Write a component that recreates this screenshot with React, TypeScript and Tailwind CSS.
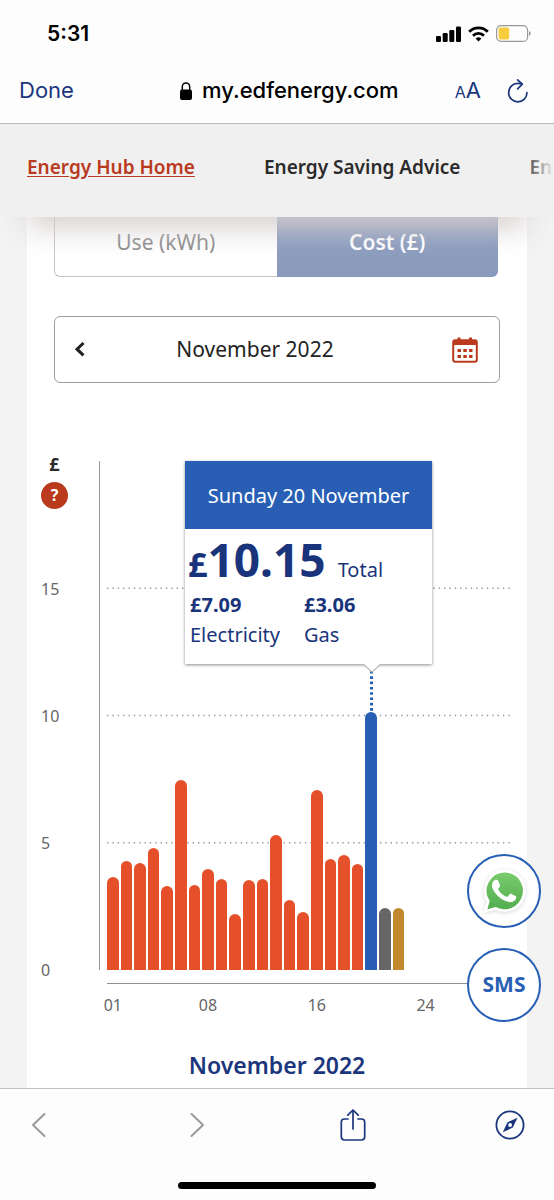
const AXIS_MAX = 20;
const DAYS_IN_MONTH = 30;
const SELECTED_DAY = 20;

const dailyCost = [
  3.66, 4.3, 4.2, 4.78, 3.3, 7.48, 3.36, 3.95, 3.57, 2.2, 3.52, 3.57, 5.32, 2.77, 2.26, 7.06,
  4.37, 4.53, 4.15, 10.12, 2.42, 2.42,
];

const days = Array.from({ length: DAYS_IN_MONTH }, (_, i) => i + 1);
const labelledDays = [1, 8, 16, 24];
const ticks = [15, 10, 5, 0];

function barColour(day: number) {
  if (day === SELECTED_DAY) return "bg-[#285fb5]";
  if (day === 21) return "bg-[#666666]";
  if (day === 22) return "bg-[#c2882d]";
  return "bg-[#e5502b]";
}

function StatusBar() {
  return (
    <div className="flex h-[58px] items-center justify-between pt-[9px] pr-[23px] pl-[47px] text-black">
      <span className="text-[21px] font-semibold">5:31</span>
      <div className="flex items-center gap-[7px]">
        <svg className="h-4 w-[25px]" viewBox="0 0 25 16" fill="currentColor">
          <rect x="0" y="10" width="5" height="6" rx="1.2" />
          <rect x="6.7" y="7" width="5" height="9" rx="1.2" />
          <rect x="13.3" y="4" width="5" height="12" rx="1.2" />
          <rect x="20" y="0.5" width="5" height="15.5" rx="1.2" />
        </svg>
        <svg className="h-4 w-[21px]" viewBox="0 0 21 16" fill="none" stroke="currentColor" strokeWidth="2.8">
          <path d="M1.2 5.8a13.2 13.2 0 0 1 18.6 0" />
          <path d="M5 9.7a7.8 7.8 0 0 1 11 0" />
          <path d="M7.6 12.6a4.1 4.1 0 0 1 5.8 0l-2.9 3z" fill="currentColor" stroke="none" />
        </svg>
        <svg className="h-[17px] w-[35px]" viewBox="0 0 35 17">
          <rect x="0.6" y="0.6" width="31" height="15.8" rx="4.5" fill="none" stroke="#999" strokeWidth="1.2" />
          <rect x="2.6" y="2.6" width="10.6" height="11.8" rx="2" fill="#f7cd3d" />
          <path d="M33 6v5c1-.4 1.7-1.3 1.7-2.5S34 6.4 33 6z" fill="#999" />
        </svg>
      </div>
    </div>
  );
}

function AddressBar() {
  return (
    <div className="flex h-[66px] items-center border-b border-[#b9b9bb] pr-[25px] pl-[19px] text-[22px] text-[#1b367d]">
      <button type="button">Done</button>
      <div className="flex flex-1 items-center justify-center gap-[10px] pl-[50px] font-medium text-black">
        <svg className="h-[18px] w-3" viewBox="0 0 12 18">
          <rect x="0" y="7.5" width="12" height="10.5" rx="2" fill="currentColor" />
          <path d="M2.3 8.5V4.8a3.7 3.9 0 0 1 7.4 0v3.7" fill="none" stroke="currentColor" strokeWidth="1.5" />
        </svg>
        <span>my.edfenergy.com</span>
      </div>
      <button type="button" aria-label="Text size" className="flex items-baseline">
        <span className="text-base">A</span>
        <span>A</span>
      </button>
      <button type="button" aria-label="Reload" className="ml-[26px]">
        <svg
          className="h-[26px] w-[22px]"
          viewBox="0 0 22 26"
          fill="none"
          stroke="currentColor"
          strokeWidth="1.7"
          strokeLinecap="round"
          strokeLinejoin="round"
        >
          <path d="M20 14.5A9.2 9.2 0 1 1 10.8 5.4c1.6 0 2.9.1 4.2.6" />
          <path d="M10.6 1.8l4.7 4.4-4.7 4.6" />
        </svg>
      </button>
    </div>
  );
}

function SiteNav() {
  return (
    <nav className="relative flex h-[93px] items-center gap-[69px] overflow-hidden bg-[#f0f0f0] pb-1.5 pl-[27px] text-[19px] font-semibold whitespace-nowrap text-[#2b2b2b]">
      <a href="#home" className="text-[#b93a20] underline underline-offset-2">
        Energy Hub Home
      </a>
      <a href="#advice">Energy Saving Advice</a>
      <a href="#more">En</a>
      <div className="absolute inset-y-0 right-0 w-8 bg-gradient-to-r from-transparent to-[#f0f0f0]" />
    </nav>
  );
}

function UnitToggle() {
  return (
    <div className="-mt-[10px] mr-[2px] flex h-[70px] text-[21px]">
      <button type="button" className="flex-1 rounded-bl-md border-b border-l border-[#c4c4c4] pt-0.5 text-[#8a8a8a]">
        Use (kWh)
      </button>
      <button type="button" className="flex-1 rounded-br-md bg-[#8a9bbd] pt-0.5 font-semibold text-white">
        Cost (£)
      </button>
    </div>
  );
}

function MonthPicker() {
  return (
    <div className="mt-[39px] flex h-[67px] items-center justify-between rounded-md border border-[#9d9d9d] pr-[21px] pl-[19px] text-[21px] text-[#222]">
      <button type="button" aria-label="Previous month">
        <svg className="h-4 w-[11px]" viewBox="0 0 11 16" fill="none" stroke="currentColor" strokeWidth="3">
          <path d="M9.5 1L3 7.2l6.5 6.2" />
        </svg>
      </button>
      <span className="flex-1 pr-[27px] text-center">November 2022</span>
      <button type="button" aria-label="Pick a date" className="text-[#b93a1c]">
        <svg className="h-[26px] w-[26px]" viewBox="0 0 26 26" fill="currentColor">
          <rect x="1.2" y="3.2" width="23.6" height="21.6" rx="2" fill="none" stroke="currentColor" strokeWidth="2" />
          <path d="M1 3h24v5H1zM5.5 0.5h3v3h-3zM17 0.5h3v3h-3z" />
          <path d="M5.5 12H9v3H5.5zM11.3 12h3.5v3h-3.5zM17 12h3.500v3H17zM5.5 18H9v3H5.5zM11.3 18h3.5v3h-3.5zM17 18h3.5v3H17z" />
        </svg>
      </button>
    </div>
  );
}

function DayTooltip() {
  return (
    <div className="absolute top-0 left-[85px] w-[247px]">
      <div className="h-[203px] bg-white text-xl text-[#19347a] shadow-[0_1px_3px_rgba(0,0,0,0.45)]">
        <div className="flex h-[68px] items-center justify-center bg-[#285fb5] pt-0.5 text-white">
          Sunday 20 November
        </div>
        <p className="flex h-[61px] items-baseline pt-[7px] pl-[3px] leading-[46px] font-bold">
          <span className="text-[34px]">£</span>
          <span className="text-[46px]">10.15</span>
          <span className="ml-3 font-normal">Total</span>
        </p>
        <dl className="flex gap-6 pl-[5px] leading-[30px]">
          <div className="flex flex-col-reverse">
            <dt>Electricity</dt>
            <dd className="font-bold">£7.09</dd>
          </div>
          <div className="flex flex-col-reverse">
            <dt>Gas</dt>
            <dd className="font-bold">£3.06</dd>
          </div>
        </dl>
      </div>
      <svg className="absolute top-[202px] left-[177px] h-[52px] w-[20px]" viewBox="0 0 20 52">
        <path d="M9.5 8v44" stroke="#285fb5" strokeWidth="3" strokeDasharray="2.6 2.7" />
        <path d="M1 0l9 8.5L19 0z" fill="#fff" />
        <path d="M1 1l9 8L19 1" fill="none" stroke="#bbb" strokeWidth="1.3" />
      </svg>
    </div>
  );
}

function CostChart() {
  return (
    <section className="mt-[73px] flex pr-[14px] pl-[14px]">
      <div className="w-[58px] text-base text-[#666]">
        <div className="flex w-[27px] flex-col items-center gap-[10px]">
          <span className="h-4 text-lg leading-4 font-bold text-[#2b2b2b]">£</span>
          <button
            type="button"
            aria-label="About these costs"
            className="h-[27px] w-[27px] rounded-full bg-[#b93a1c] text-base leading-[27px] font-bold text-white"
          >
            ?
          </button>
        </div>
        <div className="mt-4">
          {ticks.map(tick => (
            <div key={tick} className="flex h-[127px] items-center">
              {tick}
            </div>
          ))}
        </div>
      </div>

      <div className="flex-1 pt-[5px]">
        <div className="relative h-[509px] border-l border-[#999] pl-[7px]">
          <svg className="absolute inset-y-0 right-[3px] left-[7px] h-full w-[calc(100%-10px)]">
            {[25, 50, 75].map(y => (
              <line
                key={y}
                x1="0"
                x2="100%"
                y1={`${y}%`}
                y2={`${y}%`}
                stroke="#999"
                strokeWidth="1.4"
                strokeDasharray="1.4 3.95"
              />
            ))}
          </svg>
          <ul className="relative grid h-full grid-cols-30 items-end gap-0.5">
            {dailyCost.map((cost, i) => (
              <li
                key={i}
                className={`rounded-t-full ${barColour(i + 1)}`}
                style={{ height: `${(cost / AXIS_MAX) * 100}%` }}
              />
            ))}
          </ul>
          <DayTooltip />
        </div>
        <div className="mt-[13px] ml-2 grid grid-cols-30 gap-0.5 border-t border-[#8f8f8f] pt-[9px] text-base text-[#666]">
          {days.map(day => (
            <span key={day} className="flex h-6 min-w-0 justify-center">
              {labelledDays.includes(day) ? String(day).padStart(2, "0") : null}
            </span>
          ))}
        </div>
      </div>
    </section>
  );
}

function ContactButtons() {
  return (
    <div className="absolute right-[13px] bottom-[66px] flex flex-col gap-5">
      <button
        type="button"
        aria-label="WhatsApp"
        className="flex h-[74px] w-[74px] items-center justify-center rounded-full border-2 border-[#285fb5] bg-white"
      >
        <svg className="h-12 w-12 drop-shadow-sm" viewBox="0 0 24 24">
          <defs>
            <linearGradient id="wa" x1="0" y1="0" x2="0" y2="1">
              <stop offset="0" stopColor="#7acb6c" />
              <stop offset="1" stopColor="#52ae50" />
            </linearGradient>
          </defs>
          <path
            d="M12.3 2.7a9.2 9.2 0 1 1-4.4 17.3l-4.2 1.1 1.15-4.1A9.2 9.2 0 0 1 12.3 2.7z"
            fill="url(#wa)"
            stroke="#fff"
            strokeWidth="2.6"
            paintOrder="stroke"
          />
          <path
            fill="#fff"
            d="M17.472 14.382c-.297-.149-1.758-.867-2.03-.967-.273-.099-.471-.148-.67.15-.197.297-.767.966-.94 1.164-.173.199-.347.223-.644.075-.297-.15-1.255-.463-2.39-1.475-.883-.788-1.48-1.761-1.653-2.059-.173-.297-.018-.458.13-.606.134-.133.298-.347.446-.52.149-.174.198-.298.298-.497.099-.198.05-.371-.025-.52-.075-.149-.669-1.612-.916-2.207-.242-.579-.487-.5-.669-.51-.173-.008-.371-.01-.57-.01-.198 0-.52.074-.792.372-.272.297-1.04 1.016-1.04 2.479 0 1.462 1.065 2.875 1.213 3.074.149.198 2.096 3.2 5.077 4.487.709.306 1.262.489 1.694.625.712.227 1.36.195 1.871.118.571-.085 1.758-.719 2.006-1.413.248-.694.248-1.289.173-1.413-.074-.124-.272-.198-.57-.347"
          />
        </svg>
      </button>
      <button
        type="button"
        className="h-[74px] w-[74px] rounded-full border-2 border-[#285fb5] bg-white text-[21px] font-bold text-[#285fb5]"
      >
        SMS
      </button>
    </div>
  );
}

function BrowserToolbar() {
  return (
    <footer className="h-[112px] border-t border-[#c0c0c2] bg-[#fdfdfd] text-[#1b367d]">
      <div className="flex h-[72px] items-center justify-between pr-[29px] pl-[24px]">
        <button type="button" aria-label="Back" className="text-[#9a9a9a]">
          <svg className="h-8 w-[30px]" viewBox="0 0 30 32" fill="none" stroke="currentColor" strokeWidth="2" strokeLinecap="round" strokeLinejoin="round">
            <path d="M20.5 5L9 16l11.5 11" />
          </svg>
        </button>
        <button type="button" aria-label="Forward" className="text-[#9a9a9a]">
          <svg className="h-8 w-[30px]" viewBox="0 0 30 32" fill="none" stroke="currentColor" strokeWidth="2" strokeLinecap="round" strokeLinejoin="round">
            <path d="M10.5 5L22 16 10.5 27" />
          </svg>
        </button>
        <button type="button" aria-label="Share">
          <svg className="h-8 w-[30px]" viewBox="0 0 30 32" fill="none" stroke="currentColor" strokeWidth="1.7" strokeLinecap="round" strokeLinejoin="round">
            <path d="M10 10H6.5a3.2 3.2 0 0 0-3.2 3.2v14.6A3.2 3.2 0 0 0 6.5 31h17a3.2 3.2 0 0 0 3.2-3.2V13.2a3.2 3.2 0 0 0-3.2-3.2H20" />
            <path d="M15 20V1.5M9.8 6.2L15 1l5.2 5.2" />
          </svg>
        </button>
        <button type="button" aria-label="Open in browser">
          <svg className="h-8 w-[30px]" viewBox="0 0 30 32">
            <circle cx="15" cy="16" r="13.6" fill="none" stroke="currentColor" strokeWidth="1.8" />
            <path d="M22.5 8.8l-4.7 9.8-10 4.7 4.7-10z" fill="currentColor" />
            <circle cx="15.1" cy="16" r="1.9" fill="#fff" />
          </svg>
        </button>
      </div>
      <div className="mx-auto mt-[21px] h-[7px] w-[198px] rounded-full bg-black" />
    </footer>
  );
}

export default function App() {
  return (
    <div className="flex min-h-screen flex-col bg-[#fdfdfd] font-['Inter',sans-serif]">
      <header>
        <StatusBar />
        <AddressBar />
      </header>
      <div className="flex flex-1 flex-col font-['Noto_Sans',sans-serif]">
        <SiteNav />
        <main className="relative flex flex-1 flex-col overflow-hidden bg-[#f3f3f3] px-[27px]">
          <div className="flex-1 bg-white pb-[6px]">
            <div className="px-[27px]">
              <UnitToggle />
              <MonthPicker />
            </div>
            <CostChart />
            <h2 className="mt-4 text-center text-[23px] leading-8 font-semibold text-[#1b367d]">
              November 2022
            </h2>
          </div>
          <div className="pointer-events-none absolute inset-x-[27px] -top-10 h-10 shadow-[0_11px_30px_#d6cfcf]" />
          <ContactButtons />
        </main>
      </div>
      <BrowserToolbar />
    </div>
  );
}
